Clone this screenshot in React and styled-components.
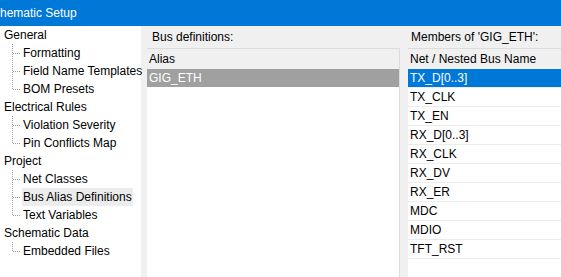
import React from 'react';
import styled, { createGlobalStyle } from 'styled-components';

const GlobalStyle = createGlobalStyle`
    body {
        margin: 0;
        font-family: "Liberation Sans", Arial, sans-serif;
        font-size: 12px;
        color: #000;
    }
`;

const Window = styled.div`
    width: 561px;
    height: 277px;
    display: flex;
    flex-direction: column;
    overflow: hidden;
    background: #f0f0f0;
`;

const TitleBar = styled.div`
    height: 26px;
    flex-shrink: 0;
    display: flex;
    align-items: center;
    background: #0078d7;
    color: #fff;
    font-size: 12px;
    white-space: nowrap;
    overflow: hidden;

    span {
        margin-left: -14px;
    }
`;

const Body = styled.div`
    flex: 1;
    display: flex;
    min-height: 0;
`;

const TreePanel = styled.div`
    width: 141px;
    flex-shrink: 0;
    background: #fff;
    padding-top: 0;
    margin-right: 6px;
`;

const TreeRow = styled.div`
    height: 18px;
    display: flex;
    align-items: center;
    white-space: nowrap;
    padding-left: ${({ child }) => (child ? '12px' : '3px')};
`;

const TreeLabel = styled.span`
    padding: 0 1px;
    line-height: 18px;
    background: ${({ selected }) => (selected ? '#ececec' : 'transparent')};
`;

const Panel = styled.div`
    display: flex;
    flex-direction: column;
    width: ${({ width }) => width || 'auto'};
    flex: ${({ width }) => (width ? '0 0 auto' : '1')};
    margin-right: ${({ gap }) => gap || 0};
    min-width: 0;
`;

const PanelLabel = styled.div`
    height: 22px;
    display: flex;
    align-items: center;
    padding-left: ${({ indent }) => indent || '4px'};
    white-space: nowrap;
`;

const Table = styled.div`
    flex: 1;
    background: #fff;
    border-top: 1px solid #dcdcdc;
    border-right: ${({ bordered }) => (bordered ? '1px solid #dcdcdc' : 'none')};
`;

const HeaderRow = styled.div`
    height: 20px;
    display: flex;
    align-items: center;
    padding-left: 2px;
    background: #f0f0f0;
    white-space: nowrap;
`;

const Row = styled.div`
    height: 18px;
    display: flex;
    align-items: center;
    padding-left: 2px;
    white-space: nowrap;
    border-bottom: ${({ lined }) => (lined ? '1px solid #ececec' : 'none')};
    background: ${({ selected }) => selected || '#fff'};
    color: ${({ selected }) => (selected ? '#fff' : '#000')};
`;

const Connector = ({ last }) => (
    <svg width="10" height="18" style={{ flexShrink: 0 }}>
        <line x1="0.5" y1="0" x2="0.5" y2={last ? 9 : 18} stroke="#a0a0a0" strokeDasharray="1 1" />
        <line x1="1" y1="9.5" x2="9" y2="9.5" stroke="#a0a0a0" strokeDasharray="1 1" />
    </svg>
);

const tree = [
    { label: 'General', children: ['Formatting', 'Field Name Templates', 'BOM Presets'] },
    { label: 'Electrical Rules', children: ['Violation Severity', 'Pin Conflicts Map'] },
    { label: 'Project', children: ['Net Classes', 'Bus Alias Definitions', 'Text Variables'] },
    { label: 'Schematic Data', children: ['Embedded Files'] },
];

const members = ['TX_D[0..3]', 'TX_CLK', 'TX_EN', 'RX_D[0..3]', 'RX_CLK', 'RX_DV', 'RX_ER', 'MDC', 'MDIO', 'TFT_RST'];

const App = () => (
    <Window>
        <GlobalStyle />
        <TitleBar>
            <span>Schematic Setup</span>
        </TitleBar>
        <Body>
            <TreePanel>
                {tree.map((group) => (
                    <React.Fragment key={group.label}>
                        <TreeRow>
                            <TreeLabel>{group.label}</TreeLabel>
                        </TreeRow>
                        {group.children.map((child, i) => (
                            <TreeRow child key={child}>
                                <Connector last={i === group.children.length - 1} />
                                <TreeLabel selected={child === 'Bus Alias Definitions'}>{child}</TreeLabel>
                            </TreeRow>
                        ))}
                    </React.Fragment>
                ))}
            </TreePanel>

            <Panel width="253px" gap="8px">
                <PanelLabel indent="5px">Bus definitions:</PanelLabel>
                <Table bordered>
                    <HeaderRow>Alias</HeaderRow>
                    <Row selected="#a0a0a0">GIG_ETH</Row>
                </Table>
            </Panel>

            <Panel>
                <PanelLabel indent="3px">Members of 'GIG_ETH':</PanelLabel>
                <Table>
                    <HeaderRow>Net / Nested Bus Name</HeaderRow>
                    {members.map((m, i) => (
                        <Row lined key={m} selected={i === 0 ? '#0078d7' : undefined}>
                            {m}
                        </Row>
                    ))}
                </Table>
            </Panel>
        </Body>
    </Window>
);

export default App;
